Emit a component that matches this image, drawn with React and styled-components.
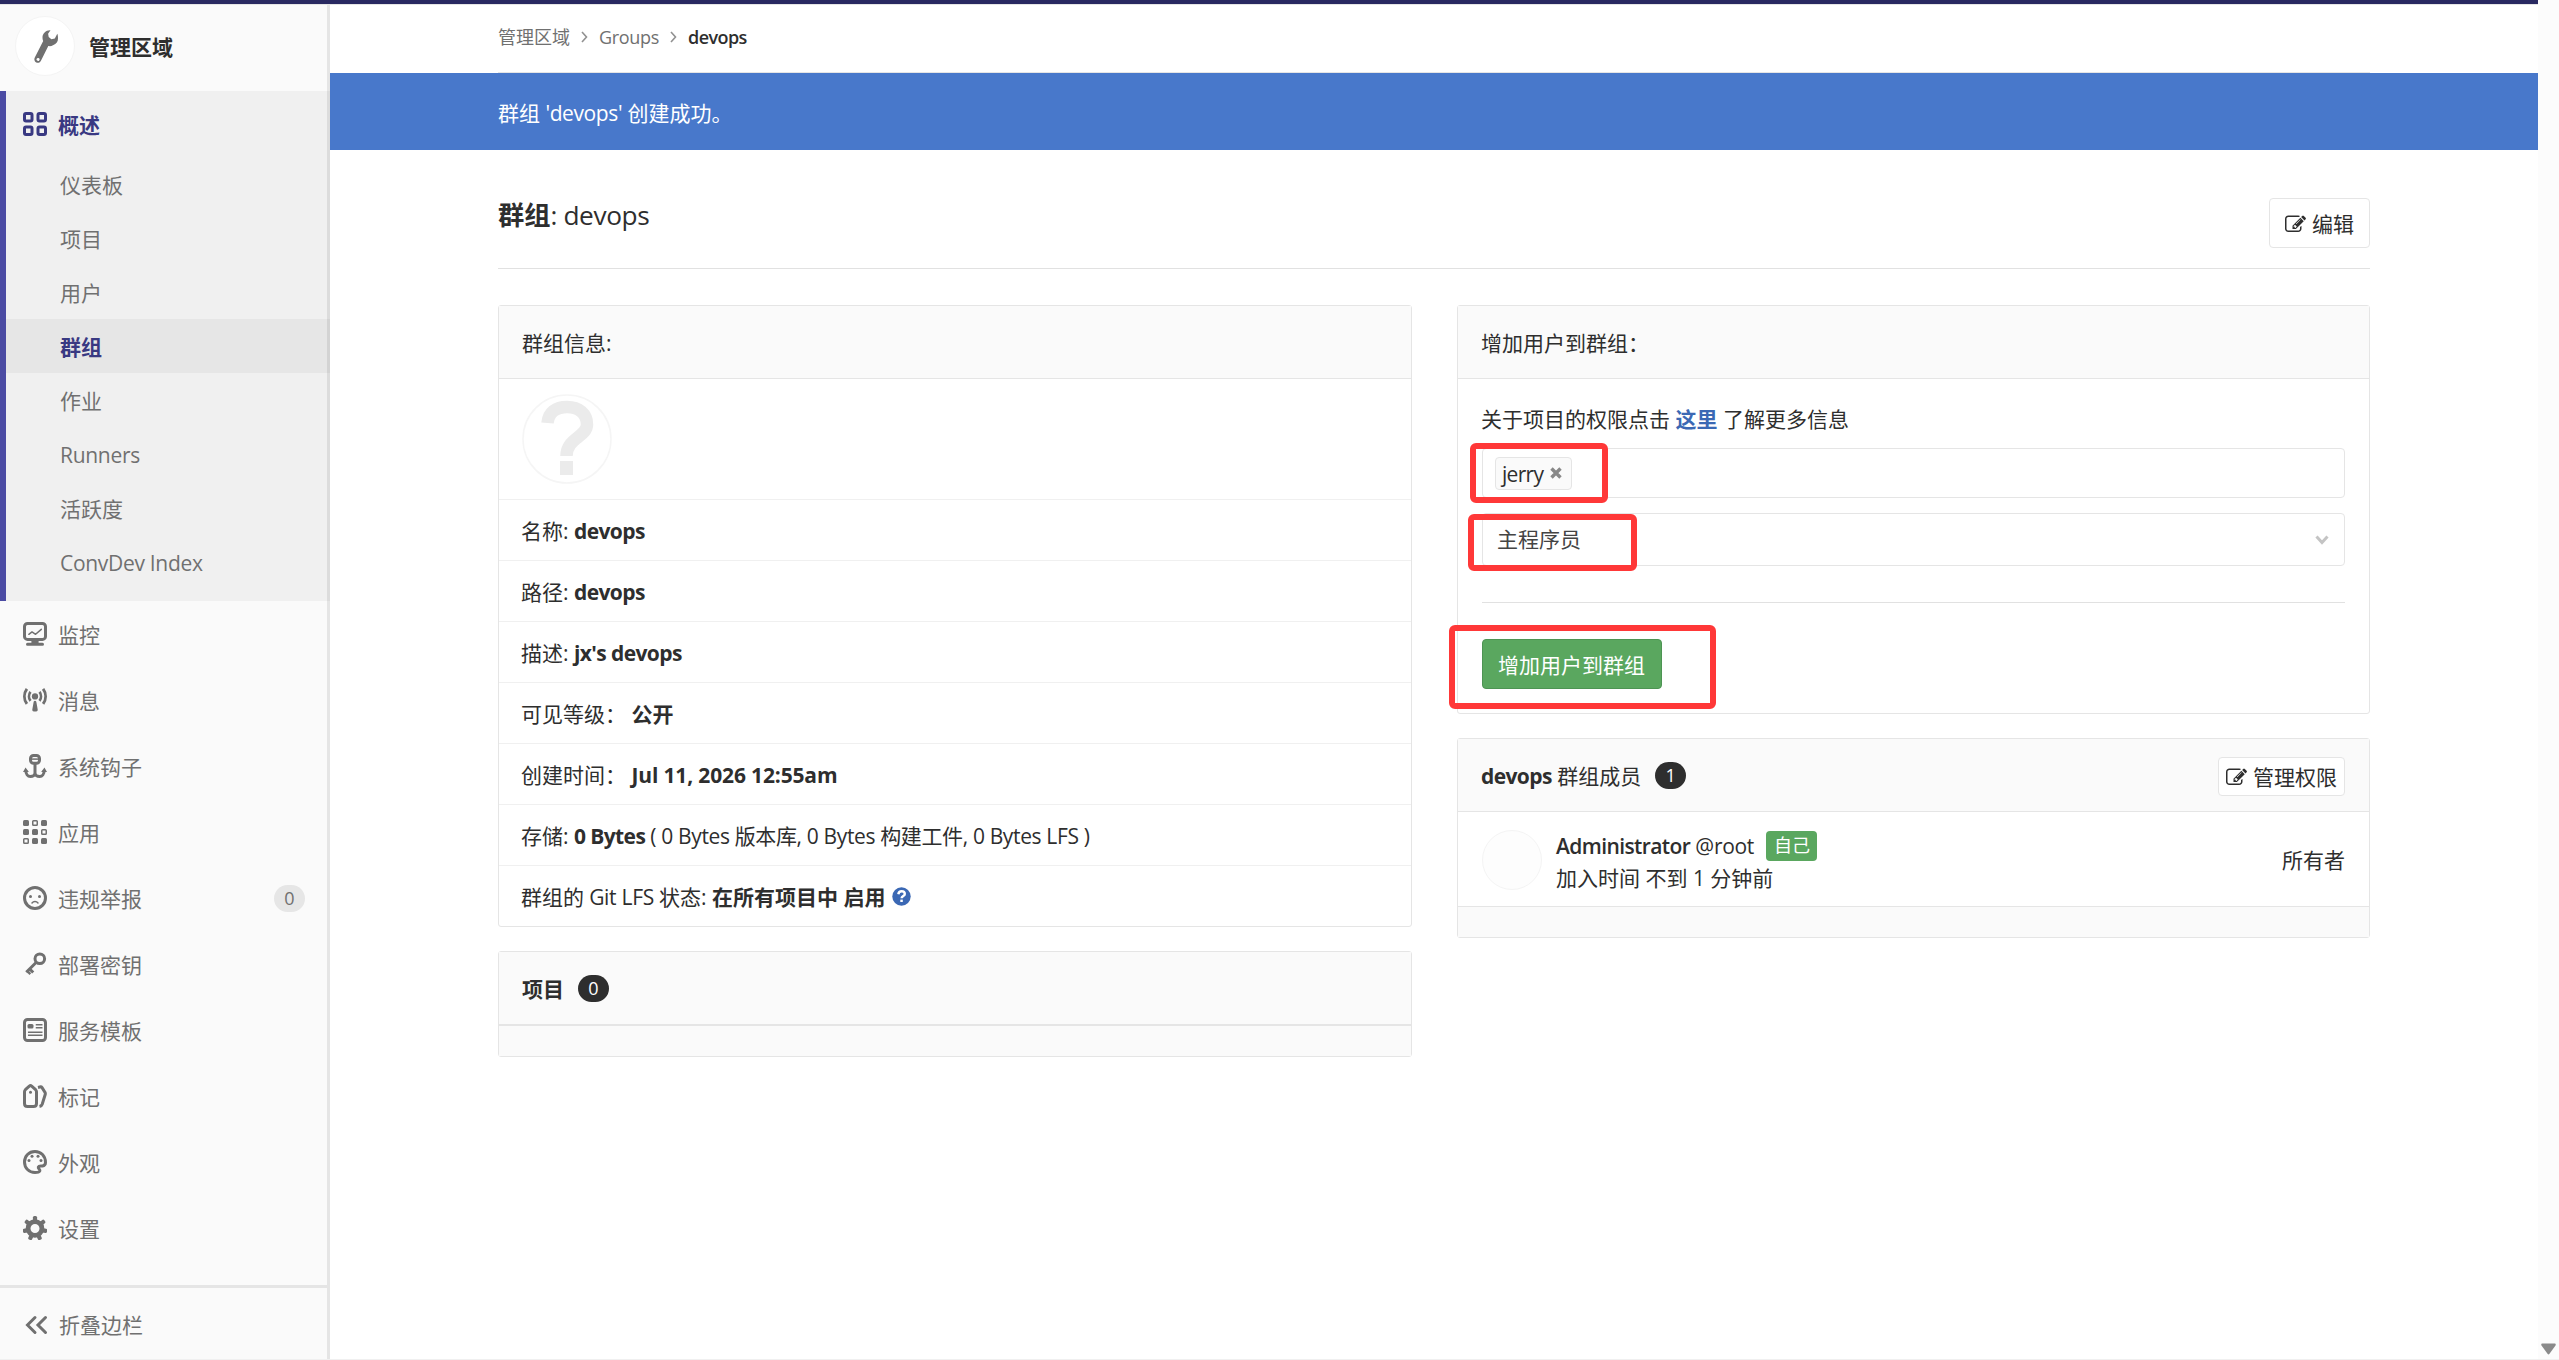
import React from "react";
import styled, { createGlobalStyle } from "styled-components";

const GlobalStyle = createGlobalStyle`
  * { box-sizing: border-box; }
  body {
    margin: 0;
    background: #fff;
    color: #2e2e2e;
    font-family: "Open Sans", "Noto Sans CJK SC", sans-serif;
    font-size: 21px;
    line-height: 30px;
    overflow: hidden;
  }
`;

const Page = styled.div`
  display: flex;
  flex-direction: column;
  width: 2559px;
  height: 1360px;
  border-bottom: 1px solid #f0f0f0;
`;

const Columns = styled.div`
  display: flex;
  flex: 1;
  min-height: 0;
`;

const Screen = styled.div`
  display: flex;
  flex-direction: column;
  width: 2538px;
`;

const TopBar = styled.div`
  flex: none;
  height: 5px;
  background: #292961;
  border-bottom: 1px solid #e5e5e5;
`;

const Body = styled.div`
  display: flex;
  flex: 1;
  min-height: 0;
`;

const ScrollGutter = styled.div`
  flex: 1;
  display: flex;
  justify-content: center;
  align-items: flex-end;
  padding-bottom: 4px;
  background: #fcfcfc;
`;

/* ---- sidebar ---- */

const Sidebar = styled.nav`
  display: flex;
  flex-direction: column;
  width: 330px;
  color: #707070;
  background: #fafafa;
  box-shadow: inset -3px 0 0 #e5e5e5;
`;

const ContextHeader = styled.div`
  display: flex;
  align-items: center;
  height: 86px;
  padding: 0 0 4px 15px;
  color: #2e2e2e;
  font-weight: 700;
`;

const ContextTitle = styled.span`
  padding-top: 2px;
`;

const AvatarCircle = styled.div`
  display: flex;
  align-items: center;
  justify-content: center;
  width: 60px;
  height: 60px;
  margin-right: 14px;
  padding-left: 2px;
  background: #fff;
  border: 1px solid #f4f4f4;
  border-radius: 50%;
`;

const ActiveSection = styled.div`
  padding-bottom: 12px;
  background: rgba(0, 0, 0, 0.04);
  border-left: 6px solid #4b4ba3;
`;

const NavRow = styled.div`
  display: flex;
  align-items: center;
  height: 66px;
  padding-left: ${(p) => (p.$active ? "17px" : "23px")};
  padding-right: 25px;
  color: ${(p) => (p.$active ? "#393982" : "inherit")};
  font-weight: ${(p) => (p.$active ? 700 : 400)};

  svg {
    flex: none;
    margin-right: 11px;
  }
`;

const NavText = styled.span`
  flex: 1;
  padding-top: 2px;
`;

const NavCount = styled.span`
  width: 31px;
  height: 27px;
  line-height: 27px;
  text-align: center;
  font-size: 18px;
  background: #e6e6e6;
  border-radius: 14px;
`;

const SubRow = styled.div`
  height: 54px;
  padding-left: 54px;
  line-height: 56px;
  letter-spacing: ${(p) => (p.$latin ? "-0.3px" : "0")};
  color: ${(p) => (p.$active ? "#393982" : "inherit")};
  font-weight: ${(p) => (p.$active ? 700 : 400)};
  background: ${(p) => (p.$active ? "rgba(0, 0, 0, 0.04)" : "none")};
`;

const Collapse = styled.div`
  display: flex;
  align-items: center;
  height: 74px;
  margin-top: auto;
  margin-right: 3px;
  padding: 2px 0 0 25px;
  border-top: 3px solid #e5e5e5;

  svg {
    margin-right: 11px;
  }
`;

/* ---- main ---- */

const Main = styled.main`
  flex: 1;
  min-width: 0;
`;

const Breadcrumbs = styled.div`
  display: flex;
  align-items: center;
  height: 68px;
  margin: 0 168px;
  padding-bottom: 3px;
  border-bottom: 1px solid #e5e5e5;
  color: #707070;
  font-size: 18px;

  svg {
    margin: 0 11px;
  }
`;

const Current = styled.span`
  color: #2e2e2e;
  font-weight: 600;
  letter-spacing: -0.6px;
`;

const Flash = styled.div`
  height: 77px;
  padding: 2px 168px 0;
  line-height: 76px;
  color: #fff;
  background: #4878cb;
`;

const Content = styled.div`
  margin: 0 168px;
`;

const PageHead = styled.div`
  display: flex;
  justify-content: space-between;
  align-items: flex-start;
  height: 119px;
  padding-top: 48px;
  border-bottom: 1px solid #e1e1e1;
`;

const PageTitle = styled.h3`
  margin: -2px 0 0;
  font-size: 26.25px;
  line-height: 38px;
  font-weight: 500;
  letter-spacing: -0.4px;
`;

const Button = styled.button`
  display: inline-flex;
  align-items: center;
  justify-content: center;
  gap: 6px;
  height: ${(p) => (p.$small ? "39px" : "50px")};
  margin-top: ${(p) => (p.$small ? "1px" : "0")};
  padding: 2px ${(p) => (p.$small ? "7px" : "15px")} 0;
  color: ${(p) => (p.$success ? "#fff" : "#2e2e2e")};
  background: ${(p) => (p.$success ? "#5aa75f" : "#fff")};
  border: 1px solid ${(p) => (p.$success ? "#4d9453" : "#e5e5e5")};
  border-radius: 4px;
  font: inherit;
  white-space: nowrap;
`;

const Grid = styled.div`
  display: grid;
  grid-template-columns: 914px 913px;
  column-gap: 45px;
  padding-top: 36px;
`;

const Column = styled.div`
  display: flex;
  flex-direction: column;
  gap: 24px;
`;

const Panel = styled.section`
  border: 1px solid #e5e5e5;
  border-radius: 3px;
`;

const PanelHead = styled.div`
  display: flex;
  align-items: center;
  height: 73px;
  padding: 1px 24px 0 23px;
  background: #fafafa;
  border-bottom: 1px solid #e5e5e5;
`;

const PanelFoot = styled.div`
  height: 31px;
  background: #fafafa;
  border-top: 1px solid #e5e5e5;
`;

const Pill = styled.span`
  width: 31px;
  height: 27px;
  margin-left: 14px;
  line-height: 27px;
  text-align: center;
  font-size: 18px;
  font-weight: 400;
  color: #fff;
  background: #2e2e2e;
  border-radius: 14px;
`;

const AvatarRow = styled.div`
  height: 120px;
  padding: 15px 23px;
`;

const InfoRow = styled.div`
  display: flex;
  align-items: center;
  height: 61px;
  padding: 1px 22px 0;
  border-top: 1px solid #f0f0f0;
  white-space: pre;
`;

const Latin = styled.span`
  letter-spacing: ${(p) => p.$ls || "-0.3px"};
`;

const Strong = styled.strong`
  font-weight: ${(p) => p.$w || 700};
  letter-spacing: ${(p) => p.$ls || "0"};
`;

const FormBody = styled.div`
  height: 334px;
  padding: 25px 24px 0;
`;

const HelpText = styled.div`
  margin-left: -1px;
`;

const HelpLink = styled.a`
  color: #3b68b4;
  font-weight: 700;
`;

const Field = styled.div`
  position: relative;
  display: flex;
  align-items: center;
  height: ${(p) => p.$h}px;
  margin-top: ${(p) => p.$mt}px;
  border: 1px solid #e5e5e5;
  border-radius: 4px;
`;

const Token = styled.span`
  display: flex;
  align-items: center;
  justify-content: space-between;
  width: 77px;
  height: 33px;
  margin-left: 12px;
  padding: 2px 9px 0 6px;
  letter-spacing: -0.7px;
  background: #fafafa;
  border: 1px solid #e5e5e5;
  border-radius: 4px;
`;

const SelectText = styled.span`
  flex: 1;
  padding: 0 0 2px 14px;
  color: #444;
`;

const Chevron = styled.svg`
  margin-right: 15px;
`;

const Rule = styled.div`
  height: 1px;
  margin: 36px 0;
  background: #e1e1e1;
`;

const Submit = styled.div`
  position: relative;
  display: flex;

  button {
    padding: 2px 16px 0 15px;
    width: 180px;
  }
`;

/* red frame drawn around a control */
const Mark = styled.div`
  position: absolute;
  left: ${(p) => p.$x}px;
  top: ${(p) => p.$y}px;
  width: ${(p) => p.$w}px;
  height: ${(p) => p.$h}px;
  border: 6px solid #ff3838;
  border-radius: 6px;
  pointer-events: none;
`;

const Spacer = styled.div`
  flex: 1;
`;

const Member = styled.div`
  display: flex;
  align-items: center;
  height: 94px;
  padding: 5px 24px 0;
`;

const MemberAvatar = styled.div`
  width: 60px;
  height: 60px;
  margin: -4px 14px 0 0;
  background: #fdfdfd;
  border: 1px solid #f4f4f4;
  border-radius: 50%;
`;

const MemberLine = styled.div`
  display: flex;
  align-items: center;
  height: 32px;
  white-space: pre;
`;

const Role = styled.span`
  margin-top: -4px;
`;

const Self = styled.span`
  height: 30px;
  margin-left: 12px;
  padding: 0 7px 0 8px;
  color: #fff;
  font-size: 18px;
  line-height: 29px;
  background: #5aa75f;
  border-radius: 4px;
`;

/* ---- icons ---- */

const Icon = ({ children }) => (
  <svg width="24" height="24" viewBox="0 0 16 16" fill="none" stroke="currentColor" strokeWidth="2">
    {children}
  </svg>
);

const solid = { fill: "currentColor", stroke: "none" };

const OverviewIcon = () => (
  <Icon>
    {[1, 10].map((y) => [1, 10].map((x) => <rect key={`${x}${y}`} x={x} y={y} width="5" height="5" rx="1" />))}
  </Icon>
);

const MonitorIcon = () => (
  <Icon>
    <rect x="1" y="1" width="14" height="10.6" rx="2" />
    <path d="M3.9 8.2 6 6.6l2.4 1.6 3.8-3.3" strokeWidth="1" strokeLinecap="round" strokeLinejoin="round" />
    <path d="M5.6 12h4.8v1.8H13a1 1 0 0 1 0 2H3a1 1 0 0 1 0-2h2.6z" {...solid} />
  </Icon>
);

const MessagesIcon = () => (
  <Icon>
    <circle cx="8" cy="5.6" r="2.1" {...solid} />
    <path d="M8 8.5c.7 0 .9.6 1 1.3l.8 4.5c.1.8-.4 1.3-1 1.3H7.2c-.6 0-1.100-.5-1-1.300l.8-4.500c.1-.7.300-1.300 1-1.300z" {...solid} />
    <path d="M5 2.600C3.700 4.300 3.700 6.900 5 8.600M11 2.600c1.300 1.700 1.300 4.300 0 6" strokeWidth="1.800" />
    <path d="M2.600.600c-2.200 3-2.200 7 0 10M13.400.600c2.200 3 2.200 7 0 10" strokeWidth="1.900" />
  </Icon>
);

const HookIcon = () => (
  <Icon>
    <rect x="5" y="1" width="6" height="5.2" rx="2" />
    <path d="M5 3.4h6" strokeWidth="1" />
    <path d="M8 6.5V15M1.900 11c0 2.500 1.300 4 3 4C6.700 15 8 14 8 12.500c0 1.500 1.300 2.500 3.100 2.500 1.700 0 3-1.500 3-4" />
    <path d="M0 12l1.700-3 2.200 3zM12.100 12l2.200-3 1.700 3z" {...solid} />
  </Icon>
);

const AppsIcon = () => (
  <Icon>
    {[[0, 0], [12, 0], [0, 6], [6, 6], [6, 12], [12, 12]].map(([x, y]) => (
      <rect key={`${x}-${y}`} x={x} y={y} width="4" height="4" rx="1" {...solid} />
    ))}
    {[[6, 0], [12, 6], [0, 12]].map(([x, y]) => (
      <rect key={`${x}-${y}`} x={x + 0.5} y={y + 0.5} width="3" height="3" rx=".5" strokeWidth="1" />
    ))}
  </Icon>
);

const AbuseIcon = () => (
  <Icon>
    <circle cx="8" cy="8" r="7" />
    <circle cx="5" cy="7" r="1" {...solid} />
    <circle cx="11" cy="7" r="1" {...solid} />
    <path d="M6 11.3c1-1.200 3-1.200 4 0" strokeWidth="1" strokeLinecap="round" />
  </Icon>
);

const KeyIcon = () => (
  <Icon>
    <circle cx="11.200" cy="4.500" r="3.200" />
    <path d="M8.900 6.800 2.200 13.500M4.300 11.200l2.500 2.500" />
    <path d="M2.600 12.400l2.300 2.300" strokeWidth="1.600" />
  </Icon>
);

const TemplateIcon = () => (
  <Icon>
    <rect x="1" y="1" width="14" height="14" rx="2" />
    <rect x="3" y="4" width="4" height="3" rx="1" {...solid} />
    <path d="M8.500 4.500H13M8.500 6.500H13M3.300 9.500H13M3.300 11.500H13" strokeWidth="1" />
  </Icon>
);

const LabelsIcon = () => (
  <Icon>
    <path d="M1 5.200c0-.6.200-1 .6-1.400L4.200 1.400c.5-.4 1.100-.4 1.600 0l2.600 2.400c.4.400.6.800.6 1.400V13c0 1.200-.8 2-2 2H3c-1.200 0-2-.8-2-2z" />
    <circle cx="5" cy="5.500" r="1" {...solid} />
    <path d="M10 2.300l1.700-.4c.4 0 .8.200 1 .5l2 3.200c.2.500.300.900.1 1.400l-2 6.500c-.3.900-.8 1.300-1.800 1.500" />
  </Icon>
);

const PaletteIcon = () => (
  <Icon>
    <path d="M15 8.300C15 4 12 1 8 1S1 4 1 8s3 7 7 7c1.500 0 2.800-.4 3.200-1 .6-1-1.400-1.600-1-2.600.4-1 1.600-.6 2.800-.8 1.300-.2 2-1 2-2.300z" />
    <circle cx="6" cy="4.200" r="1" {...solid} />
    <circle cx="10" cy="4.200" r="1" {...solid} />
    <circle cx="4" cy="7" r="1" {...solid} />
    <circle cx="12" cy="7" r="1" {...solid} />
  </Icon>
);

const GearIcon = () => (
  <Icon>
    <circle cx="8" cy="8.300" r="4.600" strokeWidth="3.200" />
    {[0, 1, 2, 3, 4, 5, 6].map((i) => (
      <rect key={i} x="6.600" y="0" width="2.800" height="3.600" rx="1" transform={`rotate(${(i * 360) / 7} 8 8.300)`} {...solid} />
    ))}
  </Icon>
);

const CollapseIcon = () => (
  <svg width="23" height="20" viewBox="0 0 23 20" fill="none" stroke="currentColor" strokeWidth="3" strokeLinecap="round">
    <path d="M10 2.500 2.500 10l7.500 7.500M20.500 2.500 13 10l7.500 7.500" />
  </svg>
);

const WrenchIcon = () => (
  <svg width="24" height="33" viewBox="0 0 24 33" fill="#707070">
    <path
      fillRule="evenodd"
      d="M16.500.3C12 0 8.500 3.500 8.500 7.500c0 1.500.3 2.500.7 3.500L.8 27.500c-1.100 2.300 0 4.200 1.500 5 1.500.8 3.500.3 4.500-1.500l7.500-15c1.500.3 3.200.2 4.700-.8C22.500 14 24 11.500 24 8.500c0-2-.1-3.500-.7-4.800l-2.500 4.900-3.400.6-2.700-2.200-.6-3.200zM4.500 28a1.500 1.500 0 1 1-1.400 2.600A1.500 1.500 0 0 1 4.500 28z"
    />
  </svg>
);

const CrumbArrow = () => (
  <svg width="7" height="12" viewBox="0 0 7 12" fill="none" stroke="#919191" strokeWidth="1.600">
    <path d="M1 1l4.500 5L1 11" />
  </svg>
);

const EditIcon = () => (
  <svg width="21" height="21" viewBox="0 0 1792 1792" fill="currentColor">
    <path d="M888 1184l116-116-152-152-116 116v56h96v96h56zm440-720q-16-16-33 1l-350 350q-17 17-1 33t33-1l350-350q17-17 1-33zm80 594v190q0 119-84.500 203.500t-203.500 84.500h-832q-119 0-203.500-84.500t-84.500-203.500v-832q0-119 84.500-203.500t203.500-84.500h832q63 0 117 25 15 7 18 23 3 17-9 29l-49 49q-14 14-32 8-23-6-45-6h-832q-66 0-113 47t-47 113v832q0 66 47 113t113 47h832q66 0 113-47t47-113v-126q0-13 9-22l64-64q15-15 35-7t20 29zm-96-738l288 288-672 672h-288v-288zm444 132l-92 92-288-288 92-92q28-28 68-28t68 28l152 152q28 28 28 68t-28 68z" />
  </svg>
);

const HelpSvg = styled.svg`
  margin-left: 6px;
`;

const HelpIcon = () => (
  <HelpSvg width="19" height="19" viewBox="0 0 19 19">
    <circle cx="9.500" cy="9.500" r="9.200" fill="#3b68b4" />
    <path d="M6.300 7.200c.3-2 1.600-2.900 3.300-2.900 1.900 0 3.200 1 3.200 2.600 0 2.200-3.200 2-3.200 4.400" fill="none" stroke="#fff" strokeWidth="2.400" />
    <rect x="8.300" y="12.600" width="2.500" height="2.400" fill="#fff" />
  </HelpSvg>
);

const CloseSvg = styled.svg`
  margin-top: -2px;
`;

const CloseIcon = () => (
  <CloseSvg width="12" height="12" viewBox="0 0 12 12" stroke="#888" strokeWidth="3.400">
    <path d="M1.500 1.500l9 9M10.500 1.500l-9 9" />
  </CloseSvg>
);

const UnknownAvatar = () => (
  <svg width="90" height="90" viewBox="0 0 90 90" fill="none">
    <circle cx="45" cy="45" r="44" stroke="#f5f5f5" strokeWidth="1.500" />
    <path d="M25.500 29C26.500 18 34 13 45 13c12 0 20 7 20 17.500C65 43 44.500 44 44.500 62" stroke="#ebebeb" strokeWidth="12.500" />
    <rect x="38" y="67" width="13" height="14" fill="#ebebeb" />
  </svg>
);

const subItems = ["仪表板", "项目", "用户", "群组", "作业", "Runners", "活跃度", "ConvDev Index"];

const navItems = [
  { text: "监控", icon: MonitorIcon },
  { text: "消息", icon: MessagesIcon },
  { text: "系统钩子", icon: HookIcon },
  { text: "应用", icon: AppsIcon },
  { text: "违规举报", icon: AbuseIcon, count: 0 },
  { text: "部署密钥", icon: KeyIcon },
  { text: "服务模板", icon: TemplateIcon },
  { text: "标记", icon: LabelsIcon },
  { text: "外观", icon: PaletteIcon },
  { text: "设置", icon: GearIcon },
];

function AdminSidebar() {
  return (
    <Sidebar>
      <ContextHeader>
        <AvatarCircle>
          <WrenchIcon />
        </AvatarCircle>
        <ContextTitle>管理区域</ContextTitle>
      </ContextHeader>
      <ActiveSection>
        <NavRow $active>
          <OverviewIcon />
          <NavText>概述</NavText>
        </NavRow>
        {subItems.map((item) => (
          <SubRow key={item} $active={item === "群组"} $latin={/^[A-Z]/.test(item)}>
            {item}
          </SubRow>
        ))}
      </ActiveSection>
      {navItems.map(({ text, icon: ItemIcon, count }) => (
        <NavRow key={text}>
          <ItemIcon />
          <NavText>{text}</NavText>
          {count !== undefined && <NavCount>{count}</NavCount>}
        </NavRow>
      ))}
      <Collapse>
        <CollapseIcon />
        折叠边栏
      </Collapse>
    </Sidebar>
  );
}

function GroupInfo() {
  return (
    <Panel>
      <PanelHead>群组信息:</PanelHead>
      <AvatarRow>
        <UnknownAvatar />
      </AvatarRow>
      <InfoRow>名称: <Strong $ls="-0.6px">devops</Strong></InfoRow>
      <InfoRow>路径: <Strong $ls="-0.6px">devops</Strong></InfoRow>
      <InfoRow>描述: <Strong $ls="-0.6px">jx's devops</Strong></InfoRow>
      <InfoRow>可见等级： <Strong>公开</Strong></InfoRow>
      <InfoRow>创建时间： <Strong $ls="-0.15px">Jul 11, 2026 12:55am</Strong></InfoRow>
      <InfoRow>
        存储: <Strong $ls="-0.6px">0 Bytes</Strong>
        <Latin $ls="-0.36px"> ( 0 Bytes 版本库, 0 Bytes 构建工件, 0 Bytes LFS )</Latin>
      </InfoRow>
      <InfoRow>
        群组的<Latin> Git LFS </Latin>状态: <Strong>在所有项目中 启用</Strong>
        <HelpIcon />
      </InfoRow>
    </Panel>
  );
}

function AddUsers() {
  return (
    <Panel>
      <PanelHead>增加用户到群组：</PanelHead>
      <FormBody>
        <HelpText>
          关于项目的权限点击 <HelpLink>这里</HelpLink> 了解更多信息
        </HelpText>
        <Field $h={50} $mt={14}>
          <Token>
            jerry
            <CloseIcon />
          </Token>
          <Mark $x={-13} $y={-6} $w={138} $h={60} />
        </Field>
        <Field $h={53} $mt={15}>
          <SelectText>主程序员</SelectText>
          <Chevron width="14" height="10" viewBox="0 0 14 10" fill="none" stroke="#c4c4c4" strokeWidth="3">
            <path d="M1.500 1.500 7 7.500l5.500-6" />
          </Chevron>
          <Mark $x={-15} $y={0} $w={169} $h={57} />
        </Field>
        <Rule />
        <Submit>
          <Button $success>增加用户到群组</Button>
          <Mark $x={-33} $y={-14} $w={267} $h={84} />
        </Submit>
      </FormBody>
    </Panel>
  );
}

function Members() {
  return (
    <Panel>
      <PanelHead>
        <Strong $ls="-0.6px">devops</Strong>&nbsp;群组成员
        <Pill>1</Pill>
        <Spacer />
        <Button $small>
          <EditIcon />
          管理权限
        </Button>
      </PanelHead>
      <Member>
        <MemberAvatar />
        <div>
          <MemberLine>
            <Strong $w={600} $ls="-0.6px">Administrator</Strong>
            <Latin> @root</Latin>
            <Self>自己</Self>
          </MemberLine>
          <MemberLine>加入时间 不到 1 分钟前</MemberLine>
        </div>
        <Spacer />
        <Role>所有者</Role>
      </Member>
      <PanelFoot />
    </Panel>
  );
}

function App() {
  return (
    <Page>
      <GlobalStyle />
      <Columns>
        <Screen>
          <TopBar />
          <Body>
            <AdminSidebar />
            <Main>
              <Breadcrumbs>
                管理区域
                <CrumbArrow />
                <Latin>Groups</Latin>
                <CrumbArrow />
                <Current>devops</Current>
              </Breadcrumbs>
              <Flash>
                群组 <Latin $ls="-0.4px">'devops'</Latin> 创建成功。
              </Flash>
              <Content>
                <PageHead>
                  <PageTitle>
                    <Strong>群组</Strong>: devops
                  </PageTitle>
                  <Button>
                    <EditIcon />
                    编辑
                  </Button>
                </PageHead>
                <Grid>
                  <Column>
                    <GroupInfo />
                    <Panel>
                      <PanelHead>
                        <Strong>项目</Strong>
                        <Pill>0</Pill>
                      </PanelHead>
                      <PanelFoot />
                    </Panel>
                  </Column>
                  <Column>
                    <AddUsers />
                    <Members />
                  </Column>
                </Grid>
              </Content>
            </Main>
          </Body>
        </Screen>
        <ScrollGutter>
          <svg width="15" height="12" viewBox="0 0 15 12" fill="#8a8a8a">
            <path d="M1.500.5h12c1.200 0 1.600 1 1 1.900l-6 8.400c-.6.800-1.400.8-2 0l-6-8.400C-.1 1.500.3.500 1.500.5z" />
          </svg>
        </ScrollGutter>
      </Columns>
    </Page>
  );
}

export default App;
